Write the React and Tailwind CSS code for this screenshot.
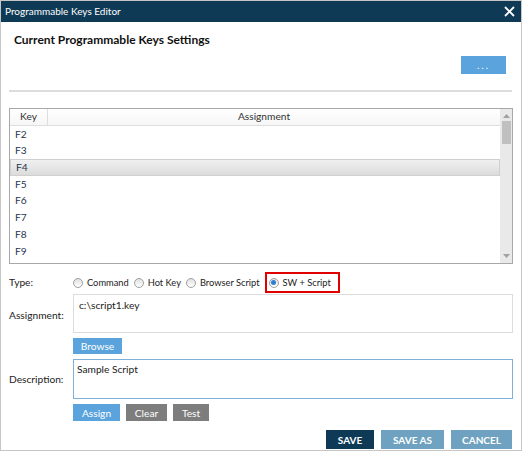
import React from 'react';

const keys = ['F2', 'F3', 'F4', 'F5', 'F6', 'F7', 'F8', 'F9'];

function Radio({ checked, label }) {
  return (
    <label className="flex items-center gap-[4px]">
      <span className="w-[10px] h-[10px] rounded-full border border-[#a0a0a0] bg-gradient-to-b from-[#e0e0e0] to-white flex items-center justify-center">
        {checked && <span className="w-[5px] h-[5px] rounded-full bg-[#2f7fd0]" />}
      </span>
      <span>{label}</span>
    </label>
  );
}

export default function App() {
  return (
    <div
      className="w-[522px] h-[451px] border border-[#c6c6c6] bg-white flex flex-col text-[10.2px] text-[#222]"
      style={{ fontFamily: 'Lato, "Noto Sans", sans-serif' }}
    >
      <div className="h-[21px] bg-[#0e3a56] flex items-center justify-between px-[4px] text-white text-[10px] shrink-0">
        <span>Programmable Keys Editor</span>
        <svg width="11" height="11" viewBox="0 0 11 11" className="mr-[2px]">
          <path d="M1 1L10 10M10 1L1 10" stroke="white" strokeWidth="1.8" />
        </svg>
      </div>

      <div className="flex flex-col px-[8px]">
        <div className="pl-[5px] mt-[10px] h-[16px] leading-[16px] font-bold text-[12px] text-[#111]">
          Current Programmable Keys Settings
        </div>
        <div className="flex justify-end mt-[8px] pr-[7px]">
          <button className="w-[45px] h-[18px] bg-[#5aa3dc] text-white text-[10px] leading-none tracking-[2px]">...</button>
        </div>
        <div className="mt-[16px] h-[2px] bg-[#dcdcdc] mr-[1px]" />

        <div className="mt-[16px] h-[156px] border border-[#a8a8a8] flex">
          <div className="flex-1 flex flex-col">
            <div className="h-[17px] flex border-b border-[#dedede] text-[#333] bg-gradient-to-b from-white to-[#f6f6f6]">
              <div className="w-[38px] border-r border-[#dedede] flex items-center justify-center">Key</div>
              <div className="flex-1 flex items-center justify-center pr-[20px]">Assignment</div>
            </div>
            {keys.map((k) => (
              <div
                key={k}
                className={`h-[16.7px] flex items-center pl-[5px] text-[#1f3550] ${
                  k === 'F4' ? 'bg-gradient-to-b from-[#f0f0f0] to-[#dcdcdc] border border-[#cfcfcf] pl-[4px]' : ''
                }`}
              >
                {k}
              </div>
            ))}
          </div>
          <div className="w-[12px] bg-[#e9e9e9] flex flex-col items-center">
            <svg width="7" height="4" viewBox="0 0 7 4" className="mt-[5px]">
              <path d="M0 4L3.5 0L7 4Z" fill="#a0a0a0" />
            </svg>
            <div className="w-[9px] h-[23px] bg-[#c0c0c0] mt-[3px]" />
            <div className="flex-1" />
            <svg width="7" height="4" viewBox="0 0 7 4" className="mb-[5px]">
              <path d="M0 0L3.5 4L7 0Z" fill="#a0a0a0" />
            </svg>
          </div>
        </div>

        <div className="mt-[8px] flex items-center h-[21px]">
          <span className="w-[64px] shrink-0">Type:</span>
          <div className="flex items-center gap-[5px] text-[9.3px]">
            <Radio label="Command" />
            <Radio label="Hot Key" />
            <Radio label="Browser Script" />
            <div className="h-[21px] border-2 border-[#e00000] flex items-center pl-[2px] pr-[7px]">
              <Radio checked label="SW + Script" />
            </div>
          </div>
        </div>

        <div className="mt-[1px] flex">
          <span className="w-[64px] shrink-0 pt-[14px]">Assignment:</span>
          <div className="flex-1 h-[39px] border border-[#dcdcdc] pl-[5px] pt-[3px]">c:\script1.key</div>
        </div>
        <div className="mt-[5px] pl-[64px]">
          <button className="w-[49px] h-[16px] bg-[#5aa3dc] text-white leading-none">Browse</button>
        </div>

        <div className="mt-[5px] flex">
          <span className="w-[64px] shrink-0 pt-[13px]">Description:</span>
          <div className="flex-1 h-[40px] border border-[#7fb0d8] pl-[3px] pt-[2px]">Sample Script</div>
        </div>
        <div className="mt-[5px] pl-[64px] flex gap-[6px]">
          <button className="w-[47px] h-[17px] bg-[#5aa3dc] text-white leading-none">Assign</button>
          <button className="w-[41px] h-[17px] bg-[#7d7d7d] text-white leading-none">Clear</button>
          <button className="w-[36px] h-[17px] bg-[#7d7d7d] text-white leading-none">Test</button>
        </div>

        <div className="mt-[9px] flex justify-end gap-[7px] pr-[1px]">
          <button className="w-[48px] h-[19px] bg-[#0e3a56] text-white font-bold text-[10px] leading-none">SAVE</button>
          <button className="w-[63px] h-[19px] bg-[#6ea2c0] text-white font-bold text-[10px] leading-none">SAVE AS</button>
          <button className="w-[61px] h-[19px] bg-[#6ea2c0] text-white font-bold text-[10px] leading-none">CANCEL</button>
        </div>
      </div>
    </div>
  );
}
